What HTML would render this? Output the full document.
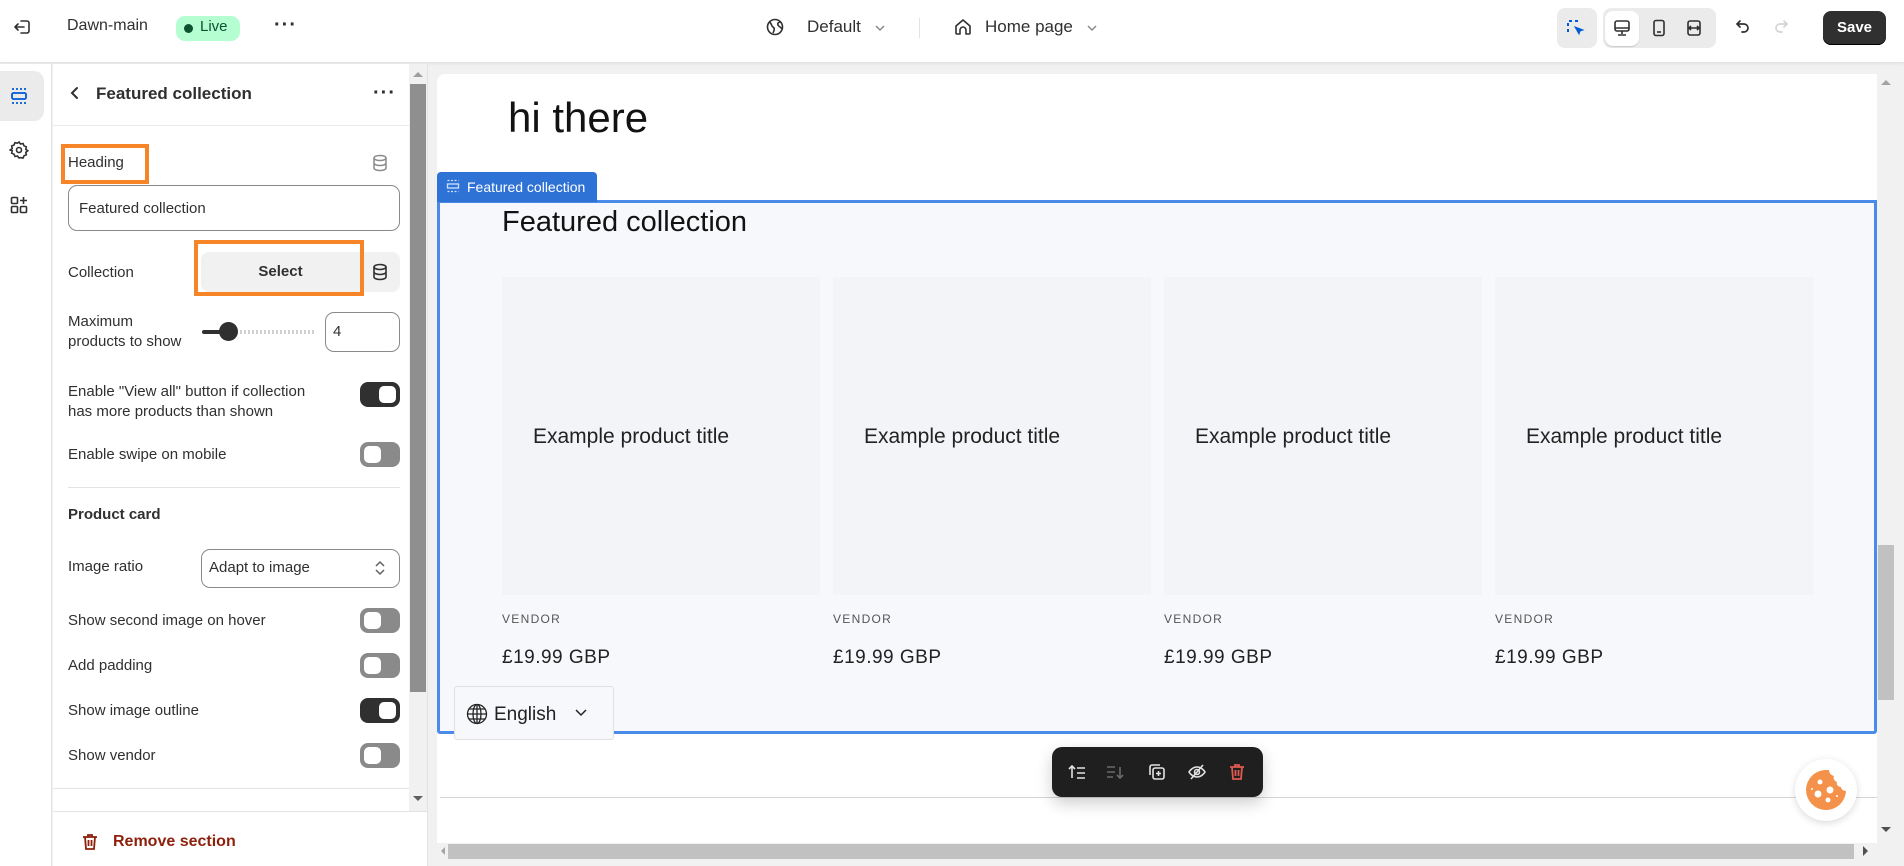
<!DOCTYPE html>
<html><head><meta charset="utf-8"><style>
*{box-sizing:border-box;margin:0;padding:0}
body{width:1904px;height:866px;overflow:hidden;font-family:"Liberation Sans",sans-serif;background:#f1f1f1;position:relative;color:#303030}
.a{position:absolute}
.t{font-size:15px;color:#303030}
.tg{position:absolute;left:360px;width:40px;height:25px;border-radius:8px;background:#8a8a8a}
.tg::after{content:"";position:absolute;left:4px;top:4px;width:17px;height:17px;border-radius:5px;background:#fff}
.tg.on{background:#303030}.tg.on::after{left:19px}
.card{position:absolute;top:277px;width:318px;height:318px;background:#f3f4f7}
.card span{position:absolute;left:31px;top:148px;font-size:21px;color:#222}
.vend{position:absolute;top:612px;font-size:12px;letter-spacing:1.3px;color:#555}
.pr{position:absolute;top:647px;font-size:19px;letter-spacing:.5px;color:#222}
.dots{position:absolute;font-size:20px;font-weight:bold;letter-spacing:1px;line-height:10px}
</style></head><body>
<!-- top bar -->
<div class="a" style="left:0;top:0;width:1904px;height:63px;background:#fff;border-bottom:1px solid #e3e3e3;box-shadow:0 1px 2px rgba(0,0,0,.06)"></div>
<svg class="a" style="left:13px;top:17px" width="20" height="20" viewBox="0 0 20 20" fill="none" stroke="#303030" stroke-width="1.6" stroke-linecap="round" stroke-linejoin="round"><path d="M8 4h6a2 2 0 0 1 2 2v8a2 2 0 0 1-2 2H8M2 10h9M5 7l-3 3 3 3"/></svg>
<div class="a" style="left:67px;top:17px;font-size:16px;color:#303030">Dawn-main</div>
<div class="a" style="left:176px;top:16px;width:64px;height:25px;border-radius:9px;background:#b4fed2"></div>
<div class="a" style="left:184px;top:24px;width:9px;height:9px;border-radius:50%;background:#0c5132"></div>
<div class="a" style="left:200px;top:18px;font-size:15px;color:#0c5132">Live</div>
<div class="dots" style="left:274px;top:20px">···</div>
<svg class="a" style="left:765px;top:17px" width="20" height="20" viewBox="0 0 20 20" fill="none" stroke="#303030" stroke-width="1.6"><circle cx="10" cy="10" r="7.5"/><path d="M4 5c3 1 2 4 4 5s1 4 0 6M16 5c-2 0-4 1-3 3s3 2 4 4"/></svg>
<div class="a" style="left:807px;top:17px;font-size:17px">Default</div>
<svg class="a" style="left:873px;top:21px" width="14" height="14" viewBox="0 0 14 14" fill="none" stroke="#8a8a8a" stroke-width="1.5"><path d="M3 5l4 4 4-4"/></svg>
<div class="a" style="left:919px;top:18px;width:1px;height:20px;background:#e3e3e3"></div>
<svg class="a" style="left:953px;top:17px" width="20" height="20" viewBox="0 0 20 20" fill="none" stroke="#303030" stroke-width="1.6" stroke-linejoin="round"><path d="M3 9l7-6 7 6v7a1 1 0 0 1-1 1h-3v-4a3 3 0 0 0-6 0v4H4a1 1 0 0 1-1-1z"/></svg>
<div class="a" style="left:985px;top:17px;font-size:17px">Home page</div>
<svg class="a" style="left:1085px;top:21px" width="14" height="14" viewBox="0 0 14 14" fill="none" stroke="#8a8a8a" stroke-width="1.5"><path d="M3 5l4 4 4-4"/></svg>
<div class="a" style="left:1557px;top:8px;width:40px;height:40px;border-radius:8px;background:#ebebeb"></div>
<svg class="a" style="left:1566px;top:18px" width="20" height="20" viewBox="0 0 20 20" fill="none" stroke="#005bd3" stroke-width="2" stroke-dasharray="3 3"><path d="M2 14V3h13"/><path d="M9 9l8 3-3 1-1 3z" fill="#005bd3" stroke-dasharray="0" stroke-width="1"/></svg>
<div class="a" style="left:1603px;top:8px;width:113px;height:40px;border-radius:8px;background:#ebebeb"></div>
<div class="a" style="left:1605px;top:11px;width:34px;height:35px;border-radius:8px;background:#fff;box-shadow:0 1px 1px rgba(0,0,0,.15)"></div>
<svg class="a" style="left:1612px;top:18px" width="20" height="20" viewBox="0 0 20 20" fill="none" stroke="#303030" stroke-width="1.6"><rect x="3" y="3" width="14" height="10" rx="2"/><path d="M3 10h14M10 13v3M6 17h8"/></svg>
<svg class="a" style="left:1649px;top:18px" width="20" height="20" viewBox="0 0 20 20" fill="none" stroke="#303030" stroke-width="1.6"><rect x="5" y="2.5" width="10" height="15" rx="2"/><path d="M8 14h4"/></svg>
<svg class="a" style="left:1684px;top:18px" width="20" height="20" viewBox="0 0 20 20" fill="none" stroke="#303030" stroke-width="1.6"><rect x="4" y="3" width="12" height="14" rx="2"/><path d="M4 10h12M7 8l-2 2 2 2M13 8l2 2-2 2"/></svg>
<svg class="a" style="left:1734px;top:17px" width="20" height="20" viewBox="0 0 20 20" fill="none" stroke="#303030" stroke-width="1.7" stroke-linecap="round"><path d="M6 4L3 7l3 3M3 7h7a4 4 0 0 1 0 8H8"/></svg>
<svg class="a" style="left:1770px;top:17px" width="20" height="20" viewBox="0 0 20 20" fill="none" stroke="#d4d4d4" stroke-width="1.7" stroke-linecap="round"><path d="M14 4l3 3-3 3M17 7h-7a4 4 0 0 0 0 8h2"/></svg>
<div class="a" style="left:1823px;top:11px;width:63px;height:34px;border-radius:8px;background:#303030;color:#fff;font-weight:bold;font-size:15px;text-align:center;line-height:34px;box-shadow:inset 0 -1px 0 #000">Save</div>

<!-- rail -->
<div class="a" style="left:0;top:64px;width:52px;height:802px;background:#fff;border-right:1px solid #e3e3e3"></div>
<div class="a" style="left:0;top:71px;width:44px;height:50px;border-radius:0 10px 10px 0;background:#ebebeb"></div>
<svg class="a" style="left:9px;top:86px" width="20" height="20" viewBox="0 0 20 20" fill="none" stroke="#005bd3" stroke-width="1.8"><rect x="3" y="7" width="14" height="6" rx="1.5"/><path d="M3 3h14M3 17h14" stroke-dasharray="2 2"/></svg>
<svg class="a" style="left:9px;top:140px" width="20" height="20" viewBox="0 0 20 20" fill="none" stroke="#303030" stroke-width="1.6"><circle cx="10" cy="10" r="2.5"/><path d="M10 2l1.5 2 2.5-.5 1 2.3 2.3 1-.5 2.5 2 1.5-2 1.5.5 2.5-2.3 1-1 2.3-2.5-.5L10 18l-1.5-2-2.5.5-1-2.3-2.3-1 .5-2.5L1.2 10l2-1.5-.5-2.5 2.3-1 1-2.3 2.5.5z"/></svg>
<svg class="a" style="left:9px;top:195px" width="20" height="20" viewBox="0 0 20 20" fill="none" stroke="#303030" stroke-width="1.6"><rect x="2.5" y="2.5" width="6" height="6" rx="1"/><rect x="2.5" y="11.5" width="6" height="6" rx="1"/><rect x="11.5" y="11.5" width="6" height="6" rx="1"/><path d="M14.5 2v7M11 5.5h7"/></svg>

<!-- panel -->
<div class="a" style="left:53px;top:64px;width:374px;height:802px;background:#fff"></div>
<div class="a" style="left:409px;top:64px;width:18px;height:747px;background:#f1f1f1"></div>
<div class="a" style="left:410px;top:84px;width:16px;height:608px;background:#8f8f8f"></div>
<div class="a" style="left:413px;top:72px;width:0;height:0;border-left:5px solid transparent;border-right:5px solid transparent;border-bottom:5px solid #a0a0a0"></div>
<div class="a" style="left:413px;top:796px;width:0;height:0;border-left:5px solid transparent;border-right:5px solid transparent;border-top:5px solid #606060"></div>
<svg class="a" style="left:67px;top:85px" width="16" height="16" viewBox="0 0 16 16" fill="none" stroke="#303030" stroke-width="2" stroke-linecap="round"><path d="M10 3L5 8l5 5"/></svg>
<div class="a" style="left:96px;top:84px;font-size:17px;font-weight:bold">Featured collection</div>
<div class="dots" style="left:373px;top:88px">···</div>
<div class="a" style="left:53px;top:125px;width:356px;height:1px;background:#ebebeb"></div>

<div class="a" style="left:61px;top:144px;width:88px;height:40px;border:4px solid #f58526"></div>
<div class="a t" style="left:68px;top:154px">Heading</div>
<svg class="a" style="left:370px;top:153px" width="20" height="20" viewBox="0 0 20 20" fill="none" stroke="#8a8a8a" stroke-width="1.5"><ellipse cx="10" cy="5" rx="6" ry="2.5"/><path d="M4 5v10c0 1.4 2.7 2.5 6 2.5s6-1.1 6-2.5V5M4 10c0 1.4 2.7 2.5 6 2.5s6-1.1 6-2.5"/></svg>
<div class="a" style="left:68px;top:185px;width:332px;height:46px;border:1px solid #8a8a8a;border-radius:9px"></div>
<div class="a t" style="left:79px;top:200px">Featured collection</div>

<div class="a t" style="left:68px;top:264px">Collection</div>
<div class="a" style="left:201px;top:252px;width:199px;height:40px;border-radius:8px;background:#f1f1f1"></div>
<div class="a" style="left:194px;top:240px;width:170px;height:56px;border:4px solid #f58526"></div>
<div class="a" style="left:201px;top:263px;width:159px;text-align:center;font-size:15px;font-weight:bold">Select</div>
<svg class="a" style="left:370px;top:262px" width="20" height="20" viewBox="0 0 20 20" fill="none" stroke="#303030" stroke-width="1.6"><ellipse cx="10" cy="5" rx="6" ry="2.5"/><path d="M4 5v10c0 1.4 2.7 2.5 6 2.5s6-1.1 6-2.5V5M4 10c0 1.4 2.7 2.5 6 2.5s6-1.1 6-2.5"/></svg>

<div class="a t" style="left:68px;top:312px;line-height:20px">Maximum<br>products to show</div>
<div class="a" style="left:202px;top:330px;width:30px;height:4px;background:#303030;border-radius:2px"></div>
<div class="a" style="left:232px;top:330px;width:83px;height:4px;background:repeating-linear-gradient(90deg,#d0d0d0 0 2px,transparent 2px 4px)"></div>
<div class="a" style="left:219px;top:322px;width:19px;height:19px;border-radius:50%;background:#303030"></div>
<div class="a" style="left:325px;top:312px;width:75px;height:40px;border:1px solid #8a8a8a;border-radius:9px"></div>
<div class="a t" style="left:333px;top:323px">4</div>

<div class="a t" style="left:68px;top:382px;line-height:20px">Enable "View all" button if collection<br>has more products than shown</div>
<div class="tg on" style="top:382px"></div>
<div class="a t" style="left:68px;top:446px">Enable swipe on mobile</div>
<div class="tg" style="top:442px"></div>
<div class="a" style="left:68px;top:487px;width:332px;height:1px;background:#e3e3e3"></div>
<div class="a" style="left:68px;top:506px;font-size:15px;font-weight:bold">Product card</div>
<div class="a t" style="left:68px;top:558px">Image ratio</div>
<div class="a" style="left:201px;top:549px;width:199px;height:39px;border:1px solid #8a8a8a;border-radius:9px"></div>
<div class="a t" style="left:209px;top:559px">Adapt to image</div>
<svg class="a" style="left:372px;top:558px" width="16" height="20" viewBox="0 0 16 20" fill="none" stroke="#616161" stroke-width="1.5"><path d="M4 8l4-4 4 4M4 12l4 4 4-4"/></svg>
<div class="a t" style="left:68px;top:612px">Show second image on hover</div>
<div class="tg" style="top:608px"></div>
<div class="a t" style="left:68px;top:657px">Add padding</div>
<div class="tg" style="top:653px"></div>
<div class="a t" style="left:68px;top:702px">Show image outline</div>
<div class="tg on" style="top:698px"></div>
<div class="a t" style="left:68px;top:747px">Show vendor</div>
<div class="tg" style="top:743px"></div>
<div class="a" style="left:53px;top:788px;width:356px;height:1px;background:#e3e3e3"></div>
<div class="a" style="left:53px;top:811px;width:374px;height:1px;background:#e3e3e3"></div>
<svg class="a" style="left:80px;top:832px" width="20" height="20" viewBox="0 0 20 20" fill="none" stroke="#8e1f0b" stroke-width="1.8"><path d="M3 5h14M8 5V3h4v2M5 5l1 12h8l1-12M8.5 8v6M11.5 8v6"/></svg>
<div class="a" style="left:113px;top:833px;font-size:16px;font-weight:bold;color:#8e1f0b">Remove section</div>
<div class="a" style="left:427px;top:64px;width:1px;height:802px;background:#e3e3e3"></div>

<!-- preview -->
<div class="a" style="left:437px;top:74px;width:1440px;height:769px;background:#fff;border-radius:8px 0 0 0"></div>
<div class="a" style="left:508px;top:94px;font-size:42px;color:#121212">hi there</div>
<div class="a" style="left:437px;top:200px;width:1440px;height:534px;background:#f7f8fb;border:3px solid #4a8ae8;border-radius:0 0 3px 3px"></div>
<div class="a" style="left:437px;top:172px;height:30px;padding:0 12px 0 30px;background:#2f72d6;border-radius:4px 4px 0 0;font-size:14px;line-height:30px;color:#fff;white-space:nowrap">Featured collection</div>
<svg class="a" style="left:446px;top:179px" width="14" height="14" viewBox="0 0 14 14" fill="none" stroke="#cfe0ff" stroke-width="1.3"><rect x="1.5" y="5" width="11" height="4"/><path d="M1.5 1.5h11M1.5 12.5h11" stroke-dasharray="2 1.5"/></svg>
<div class="a" style="left:502px;top:206px;font-size:29px;color:#121212">Featured collection</div>
<div class="card" style="left:502px"><span>Example product title</span></div>
<div class="card" style="left:833px"><span>Example product title</span></div>
<div class="card" style="left:1164px"><span>Example product title</span></div>
<div class="card" style="left:1495px"><span>Example product title</span></div>
<div class="vend" style="left:502px">VENDOR</div><div class="vend" style="left:833px">VENDOR</div><div class="vend" style="left:1164px">VENDOR</div><div class="vend" style="left:1495px">VENDOR</div>
<div class="pr" style="left:502px">£19.99 GBP</div><div class="pr" style="left:833px">£19.99 GBP</div><div class="pr" style="left:1164px">£19.99 GBP</div><div class="pr" style="left:1495px">£19.99 GBP</div>
<div class="a" style="left:454px;top:686px;width:160px;height:54px;border:1px solid #e0e0e0;border-radius:3px;background:#f7f8fb"></div>
<svg class="a" style="left:466px;top:703px" width="22" height="22" viewBox="0 0 22 22" fill="none" stroke="#222" stroke-width="1.3"><circle cx="11" cy="11" r="9.5"/><ellipse cx="11" cy="11" rx="4" ry="9.5"/><path d="M1.5 11h19M3 6h16M3 16h16M11 1.5v19"/></svg>
<div class="a" style="left:494px;top:704px;font-size:19px;color:#222">English</div>
<svg class="a" style="left:573px;top:706px" width="16" height="14" viewBox="0 0 16 14" fill="none" stroke="#222" stroke-width="1.5"><path d="M3 4l5 5 5-5"/></svg>
<div class="a" style="left:440px;top:797px;width:1437px;height:1px;background:#d6d6d6"></div>
<div class="a" style="left:1052px;top:747px;width:211px;height:50px;border-radius:10px;background:#1f1f1f;box-shadow:0 6px 16px rgba(0,0,0,.2)"></div>
<svg class="a" style="left:1067px;top:762px" width="20" height="20" viewBox="0 0 20 20" fill="none" stroke="#e3e3e3" stroke-width="1.6"><path d="M5 16V4M2 7l3-3 3 3M10 6h8M10 11h8M10 16h8"/></svg>
<svg class="a" style="left:1105px;top:762px" width="20" height="20" viewBox="0 0 20 20" fill="none" stroke="#6a6a6a" stroke-width="1.6"><path d="M2 5h8M2 10h8M2 15h6M15 5v11M12 13l3 3 3-3"/></svg>
<svg class="a" style="left:1147px;top:762px" width="20" height="20" viewBox="0 0 20 20" fill="none" stroke="#e3e3e3" stroke-width="1.6"><rect x="6" y="6" width="11" height="11" rx="2"/><path d="M3 13V5a2 2 0 0 1 2-2h8M11.5 9v5M9 11.5h5"/></svg>
<svg class="a" style="left:1187px;top:762px" width="20" height="20" viewBox="0 0 20 20" fill="none" stroke="#e3e3e3" stroke-width="1.6"><path d="M2 10s3-5 8-5 8 5 8 5-3 5-8 5-8-5-8-5z"/><circle cx="10" cy="10" r="2.5"/><path d="M4 17L16 3"/></svg>
<svg class="a" style="left:1227px;top:762px" width="20" height="20" viewBox="0 0 20 20" fill="none" stroke="#e05a4f" stroke-width="1.8"><path d="M3 5h14M8 5V3h4v2M5 5l1 12h8l1-12M8.5 8v6M11.5 8v6"/></svg>
<div class="a" style="left:1795px;top:759px;width:62px;height:62px;border-radius:50%;background:#fff;box-shadow:0 2px 8px rgba(0,0,0,.15)"></div>
<svg class="a" style="left:1803px;top:767px" width="46" height="46" viewBox="0 0 46 46"><path d="M23 3a20 20 0 1 0 20 21c-3 0-5-2-5-4-3 0-5-3-4-5-3-1-4-4-3-6-3-1-5-3-5-6z" fill="#f4914a"/><circle cx="17" cy="15" r="2.5" fill="#fff"/><circle cx="15" cy="27" r="3.5" fill="#fff"/><circle cx="27" cy="23" r="3.5" fill="#fff"/><circle cx="25" cy="33" r="2.5" fill="#fff"/><circle cx="9" cy="22" r="1" fill="#fff"/><circle cx="34" cy="29" r="1" fill="#fff"/></svg>
<!-- scrollbars -->
<div class="a" style="left:1877px;top:74px;width:17px;height:769px;background:#f1f1f1"></div>
<div class="a" style="left:1878px;top:545px;width:16px;height:155px;background:#c1c1c1"></div>
<div class="a" style="left:1881px;top:827px;width:0;height:0;border-left:5px solid transparent;border-right:5px solid transparent;border-top:5px solid #505050"></div>
<div class="a" style="left:1881px;top:80px;width:0;height:0;border-left:5px solid transparent;border-right:5px solid transparent;border-bottom:5px solid #a3a3a3"></div>
<div class="a" style="left:437px;top:843px;width:1457px;height:17px;background:#f1f1f1;border-radius:0 0 0 6px"></div>
<div class="a" style="left:448px;top:844px;width:1406px;height:15px;background:#c1c1c1"></div>
<div class="a" style="left:441px;top:847px;width:0;height:0;border-top:4px solid transparent;border-bottom:4px solid transparent;border-right:4px solid #a3a3a3"></div>
<div class="a" style="left:1863px;top:846px;width:0;height:0;border-top:5px solid transparent;border-bottom:5px solid transparent;border-left:5px solid #505050"></div>
</body></html>
